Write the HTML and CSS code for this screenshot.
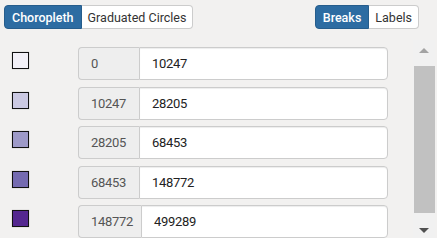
FILE: index.html
```html
<!DOCTYPE html>
<html>
<head>
<meta charset="utf-8">
<link rel="stylesheet" href="styles.css">
</head>
<body>
<div class="toolbar">
  <div class="btn-group">
    <span class="btn active">Choropleth</span>
    <span class="btn">Graduated Circles</span>
  </div>
  <div class="btn-group">
    <span class="btn active">Breaks</span>
    <span class="btn">Labels</span>
  </div>
</div>
<div class="panel">
  <div class="list">
    <div class="row">
      <span class="swatch c1"></span>
      <div class="input-group"><span class="addon">0</span><span class="field">10247</span></div>
    </div>
    <div class="row">
      <span class="swatch c2"></span>
      <div class="input-group"><span class="addon">10247</span><span class="field">28205</span></div>
    </div>
    <div class="row">
      <span class="swatch c3"></span>
      <div class="input-group"><span class="addon">28205</span><span class="field">68453</span></div>
    </div>
    <div class="row">
      <span class="swatch c4"></span>
      <div class="input-group"><span class="addon">68453</span><span class="field">148772</span></div>
    </div>
    <div class="row">
      <span class="swatch c5"></span>
      <div class="input-group"><span class="addon">148772</span><span class="field">499289</span></div>
    </div>
  </div>
  <div class="scrollbar">
    <div class="arrow up"></div>
    <div class="track"><div class="thumb"></div></div>
    <div class="arrow down"></div>
  </div>
</div>
</body>
</html>
```
FILE: styles.css
```css
html, body {
  margin: 0;
  padding: 0;
  background: #f2f1f0;
  font-family: Roboto, "Liberation Sans", sans-serif;
  font-size: 12.5px;
  color: #333;
  overflow: hidden;
  height: 238px;
}
.toolbar {
  display: flex;
  justify-content: space-between;
  padding: 5px 18px 0 4px;
  height: 35px;
  box-sizing: border-box;
}
.btn-group {
  display: flex;
  height: 24px;
}
.btn {
  display: flex;
  align-items: center;
  padding: 0 6px;
  background: #fff;
  border: 1px solid #ccc;
  color: #333;
  box-sizing: border-box;
}
.btn:first-child {
  border-radius: 4px 0 0 4px;
  padding: 0 7px;
}
.btn:last-child {
  border-radius: 0 4px 4px 0;
  border-left: none;
}
.btn.active {
  background: #2d6ca2;
  border-color: #265d8c;
  color: #fff;
  font-weight: 500;
}
.panel {
  display: flex;
  height: 203px;
  padding-top: 5px;
  box-sizing: border-box;
}
.list {
  width: 413px;
  padding-top: 7px;
  overflow: hidden;
  display: flex;
  flex-direction: column;
  gap: 6.6px;
}
.row {
  display: flex;
  align-items: flex-start;
  flex: none;
}
.swatch {
  width: 15px;
  height: 15px;
  border: 1px solid #111;
  margin: 5px 0 0 12px;
  box-shadow: 0 0 1px rgba(0,0,0,.3);
  flex: none;
}
.c1 { background: #f2f0f7; }
.c2 { background: #cbc9e2; }
.c3 { background: #9e9ac8; }
.c4 { background: #756bb1; }
.c5 { background: #54278f; }
.input-group {
  display: flex;
  margin-left: 49px;
  width: 310px;
  height: 33px;
  font-size: 13px;
}
.addon {
  display: flex;
  align-items: center;
  min-width: 61px;
  padding: 0 8px 0 12px;
  box-sizing: border-box;
  background: #eee;
  color: #555;
  border: 1px solid #ccc;
  border-right: none;
  border-radius: 4px 0 0 4px;
  letter-spacing: -0.3px;
}
.field {
  flex: 1;
  display: flex;
  align-items: center;
  padding: 0 12px;
  background: #fff;
  color: #222;
  border: 1px solid #ccc;
  border-radius: 0 4px 4px 0;
  box-shadow: inset 0 1px 1px rgba(0,0,0,.075);
  letter-spacing: -0.3px;
}
.scrollbar {
  width: 22px;
  display: flex;
  flex-direction: column;
  background: #f1f1f1;
  height: 198px;
}
.arrow {
  height: 17px;
  display: flex;
  align-items: center;
  justify-content: center;
  flex: none;
}
.arrow.up::before {
  content: "";
  border-left: 5px solid transparent;
  border-right: 5px solid transparent;
  border-bottom: 5px solid #a3a3a3;
  margin-top: 4px;
}
.arrow.down::before {
  content: "";
  border-left: 5px solid transparent;
  border-right: 5px solid transparent;
  border-top: 5px solid #505050;
  margin-top: 2px;
}
.track {
  flex: 1;
  padding-top: 9px;
}
.thumb {
  margin-left: 1px;
  height: 147px;
  background: #c1c1c1;
}
```
